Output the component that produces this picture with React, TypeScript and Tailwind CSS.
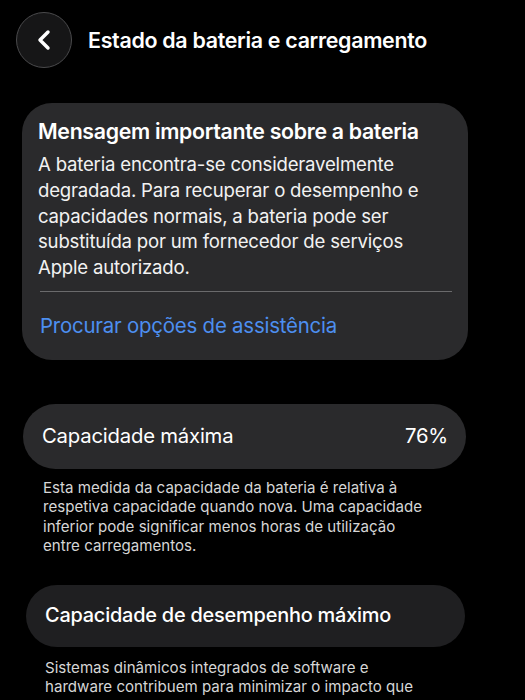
import { ChevronLeft } from 'lucide-react'

const font = { fontFamily: 'Inter, "Noto Sans", sans-serif' }

export default function App() {
  return (
    <div className="min-h-[700px] w-[525px] overflow-hidden bg-black text-white" style={font}>
      {/* cabeçalho */}
      <div className="flex items-center gap-4 px-4 pt-3">
        <button className="flex h-14 w-14 items-center justify-center rounded-full border border-[#4a4a4c] bg-[#161617]">
          <ChevronLeft className="h-8 w-8 text-white" strokeWidth={2.6} />
        </button>
        <h1 className="text-[21.4px] font-semibold tracking-[-0.3px]">Estado da bateria e carregamento</h1>
      </div>

      {/* mensagem importante */}
      <div className="ml-[22px] mt-[35px] w-[446px] rounded-[30px] bg-[#2a2a2c] px-4 pt-4 pb-[22px]">
        <h2 className="text-[21.3px] leading-6 font-semibold tracking-[-0.3px]">Mensagem importante sobre a bateria</h2>
        <p className="mt-[9px] text-[18.6px] leading-[25.8px] tracking-[-0.2px] text-[#f2f2f2]">
          A bateria encontra-se consideravelmente
          <br />
          degradada. Para recuperar o desempenho e
          <br />
          capacidades normais, a bateria pode ser
          <br />
          substituída por um fornecedor de serviços
          <br />
          Apple autorizado.
        </p>
        <div className="mt-[10px] ml-[2px] h-px bg-[#6a6a6c]" />
        <a className="mt-[22px] ml-[2px] block text-[20.4px] leading-6 tracking-[-0.2px] text-[#4d8ff0]">
          Procurar opções de assistência
        </a>
      </div>

      {/* capacidade máxima */}
      <div className="ml-[23px] mt-[44px] flex h-[65px] w-[443px] items-center justify-between rounded-full bg-[#2a2a2c] pl-[19px] pr-[18px]">
        <span className="text-[20.3px] tracking-[-0.2px]">Capacidade máxima</span>
        <span className="text-[20.3px] tracking-[-0.2px]">76%</span>
      </div>
      <p className="ml-[43px] mt-[9px] w-[430px] text-[15.1px] leading-[19.5px] text-[#d6d6d6]">
        Esta medida da capacidade da bateria é relativa à
        <br />
        respetiva capacidade quando nova. Uma capacidade
        <br />
        inferior pode significar menos horas de utilização
        <br />
        entre carregamentos.
      </p>

      {/* desempenho */}
      <div className="ml-[26px] mt-[29px] flex h-[62px] w-[439px] items-center rounded-full bg-[#1f1f21] px-[19px]">
        <span className="text-[19.9px] font-medium tracking-[-0.2px]">Capacidade de desempenho máximo</span>
      </div>
      <p className="ml-[45px] mt-[11px] w-[430px] text-[15.1px] leading-[19.5px] text-[#d6d6d6]">
        Sistemas dinâmicos integrados de software e
        <br />
        hardware contribuem para minimizar o impacto que
        <br />
        pode ser observado à medida que a bateria envelhece
      </p>
    </div>
  )
}
